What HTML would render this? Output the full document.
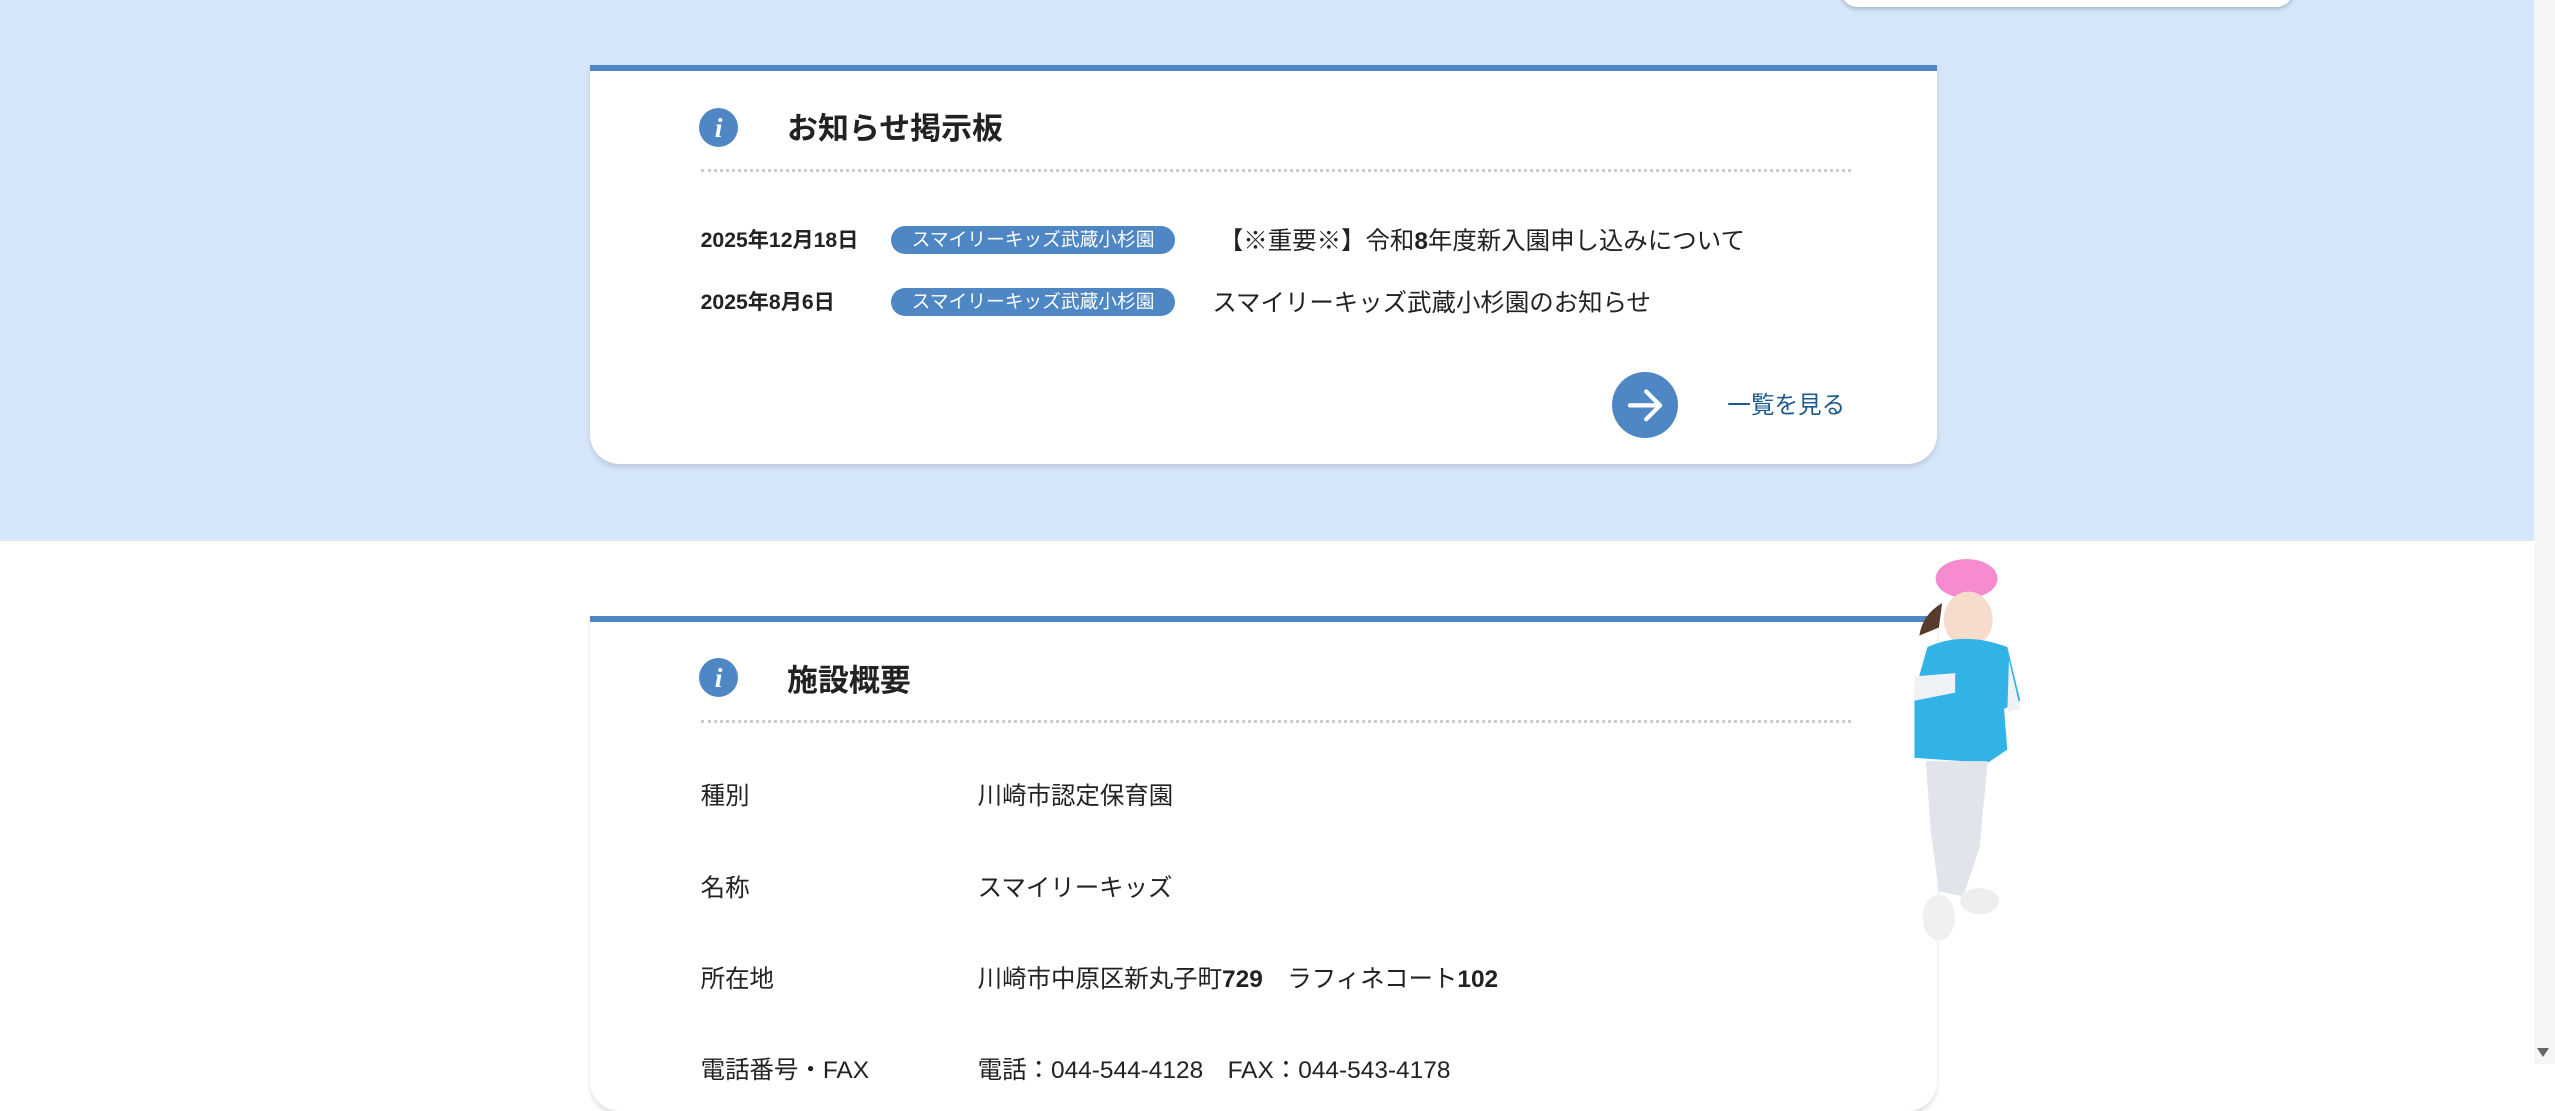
<!DOCTYPE html>
<html><head><meta charset="utf-8"><style>
html{zoom:1.62946}
body{margin:0;width:1568px;height:653px;overflow:hidden;position:relative;background:#fff;font-family:"Liberation Sans","Noto Sans CJK JP",sans-serif;color:#333}
.bg{position:absolute;left:0;top:0;width:1555px;height:332px;background:#d6e6fa}
.sb{position:absolute;left:1555px;top:0;width:13px;height:653px;background:#f5f5f5}
.card{position:absolute;left:362px;width:827px;background:#fff;border-top:4px solid #4f87c5;border-radius:0 0 18px 18px;box-shadow:0 2px 3px rgba(0,0,0,.12)}
.ic{position:absolute;left:429px;width:24px;height:24px;border-radius:50%;background:#4f87c5;color:#fff;font:italic bold 17px "Liberation Serif",serif;text-align:center;line-height:24px}
.ttl{position:absolute;left:483px;font-size:19px;font-weight:bold;color:#222}
.dot{position:absolute;left:430px;width:706px;border-top:2px dotted #ccc}
.date{position:absolute;left:430px;font-size:13px;font-weight:bold;color:#222}
.tag{position:absolute;left:547px;width:174px;height:17px;border-radius:9px;background:#4f87c5;color:#fff;font-size:11.5px;text-align:center;line-height:17px}
.t{position:absolute;left:748px;font-size:15px;color:#222}
.lb{position:absolute;left:430px;font-size:15px;color:#222}
.vl{position:absolute;left:600px;font-size:15px;color:#222}
</style></head><body>
<div class="bg"></div><div class="sb"></div>
<div style="position:absolute;left:1130px;top:-10px;width:277px;height:14px;background:#fff;border-radius:0 0 10px 10px;box-shadow:0 1px 3px rgba(0,0,0,.25)"></div>
<div class="card" style="top:40px;height:241px"></div>
<div class="ic" style="top:66px">i</div>
<div class="ttl" style="top:63px">お知らせ掲示板</div>
<div class="dot" style="top:104px"></div>
<div class="date" style="top:137px">2025年12月18日</div>
<div class="tag" style="top:139px">スマイリーキッズ武蔵小杉園</div>
<div class="t" style="top:136px">【<b>※</b>重要<b>※</b>】令和<b>8</b>年度新入園申し込みについて</div>
<div class="date" style="top:175px">2025年8月6日</div>
<div class="tag" style="top:177px">スマイリーキッズ武蔵小杉園</div>
<div class="t" style="left:744px;top:174px">スマイリーキッズ武蔵小杉園のお知らせ</div>
<div style="position:absolute;left:989px;top:228px;width:41px;height:41px;border-radius:50%;background:#4f87c5"><svg width="41" height="41" viewBox="0 0 41 41"><path d="M11 20.5h18M21 12l8.5 8.5L21 29" stroke="#fff" stroke-width="2.6" fill="none" stroke-linecap="round" stroke-linejoin="round"/></svg></div>
<div style="position:absolute;left:1060px;top:237px;font-size:14.5px;color:#1e5a8c">一覧を見る</div>
<div class="card" style="top:378px;height:300px"></div>
<div class="ic" style="top:404px">i</div>
<div class="ttl" style="top:402px">施設概要</div>
<div class="dot" style="top:442px"></div>
<div class="lb" style="top:477px">種別</div><div class="vl" style="top:477px">川崎市認定保育園</div>
<div class="lb" style="top:533px">名称</div><div class="vl" style="top:533px">スマイリーキッズ</div>
<div class="lb" style="top:589px">所在地</div><div class="vl" style="top:589px">川崎市中原区新丸子町<b>729</b>　ラフィネコート<b>102</b></div>
<div class="lb" style="top:645px">電話番号・FAX</div><div class="vl" style="top:645px">電話：044-544-4128　FAX：044-543-4178</div>
<svg style="position:absolute;left:1160px;top:335px" width="95" height="250" viewBox="0 0 95 250">
<ellipse cx="47" cy="20" rx="19" ry="12" fill="#f68bcf"/>
<ellipse cx="48" cy="45" rx="15" ry="17" fill="#f5dccd"/>
<path d="M32 35 Q20 42 18 55 L30 50Z" fill="#5a3a2a"/>
<path d="M15 90 L23 62 Q45 52 72 62 L80 95 L70 100 L72 125 L60 133 L15 130Z" fill="#31b3e5"/>
<path d="M15 80 L40 78 L40 90 L15 95Z" fill="#eef2f7"/>
<path d="M73 70 L80 100 L72 102Z" fill="#eef2f7"/>
<path d="M22 132 L60 132 L55 185 L45 215 L30 212 L25 175Z" fill="#e1e4ea"/>
<ellipse cx="30" cy="228" rx="10" ry="14" fill="#f0f0f2"/>
<ellipse cx="55" cy="218" rx="12" ry="8" fill="#eceef0"/>
</svg>
<div style="position:absolute;left:1557px;top:643px;width:0;height:0;border-left:4px solid transparent;border-right:4px solid transparent;border-top:6px solid #666"></div>
</body></html>
